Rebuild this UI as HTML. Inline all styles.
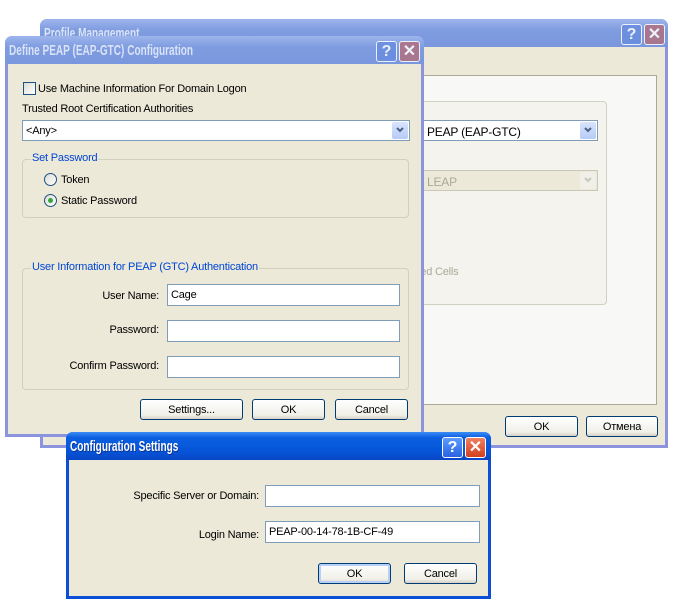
<!DOCTYPE html>
<html><head><meta charset="utf-8"><style>
*{box-sizing:border-box;margin:0;padding:0}
body{width:675px;height:611px;background:#fff;position:relative;overflow:hidden;font-family:"Liberation Sans",sans-serif;font-size:11px;letter-spacing:-0.2px;color:#000}
.abs{position:absolute}
.win{position:absolute;border-radius:7px 7px 0 0}
.tb{position:absolute;left:0;right:0;top:0;height:28px;border-radius:7px 7px 0 0;font-weight:bold;font-size:15px;padding:6px 0 0 4px;letter-spacing:0}
.tb span{display:inline-block;transform:scaleX(.67);transform-origin:left;white-space:nowrap}
.inact .tb{background:linear-gradient(#9db5ec,#7f9ce0 40%,#7a97de);color:#d9e3f7}
.act .tb{background:linear-gradient(#3d8cf5,#0a5fe0 20%,#0654d8 70%,#0846c4);color:#fff;text-shadow:1px 1px #0a2f8a}
.body{position:absolute;background:#ece9d8}
.btnq,.btnx{position:absolute;top:5px;width:21px;height:21px;border:1px solid #fff;border-radius:3px;color:#fff;font-weight:bold;font-size:16px;text-align:center;line-height:19px;letter-spacing:0}
.inact .btnq{background:#6a8de0;opacity:.85}
.inact .btnx{background:#b07080;opacity:.85}
.act .btnq{background:linear-gradient(#5c9bff,#2a62e0)}
.act .btnx{background:linear-gradient(#f08060,#d2401c)}
.inp{position:absolute;background:#fff;border:1px solid #7f9db9;padding:4px 3px;font-size:11px}
.btn{position:absolute;height:21px;border:1px solid #003c74;border-radius:3px;background:linear-gradient(#fff,#f0efe8 80%,#d6d0c5);text-align:center;line-height:20px;font-size:11px}
.grp{position:absolute;border:1px solid #d0d0bf;border-radius:4px}
.leg{position:absolute;top:-8px;left:8px;background:#ece9d8;color:#0046d5;padding:0 1px;font-size:11px;white-space:nowrap}
.lbl{position:absolute;font-size:11px;white-space:nowrap;margin-top:1px}
.r{text-align:right}
.dd{position:absolute;width:16px;height:17px;right:1px;top:1px;background:linear-gradient(#d8e4fd,#b6cbf6);border-radius:2px}
.dd svg{position:absolute;left:4px;top:5px}
.radio{position:absolute;width:13px;height:13px;border-radius:50%;border:1px solid #1c5180;background:linear-gradient(135deg,#dcdcd6,#fff)}
</style></head><body>

<!-- Back window -->
<div class="win inact" style="left:40px;top:19px;width:628px;height:429px;background:#8b94dd">
 <div class="tb"><span>Profile Management</span></div>
 <div class="btnq" style="left:581px">?</div><div class="btnx" style="left:604px">✕</div>
 <div class="body" style="left:3px;top:28px;right:3px;bottom:3px">
  <div class="abs" style="left:372px;top:28px;width:242px;height:330px;background:#f8f8f6;border:1px solid #aca899"></div>
  <div class="grp" style="left:372px;top:54px;width:192px;height:204px;background:#f4f3ee"></div>
  <div class="inp" style="left:380px;top:73px;width:175px;height:21px;font-size:12px">PEAP (EAP-GTC)<div class="dd"><svg width="8" height="6"><path d="M1 1L4 4L7 1" stroke="#4d6185" stroke-width="2" fill="none"/></svg></div></div>
  <div class="inp" style="left:380px;top:123px;width:175px;height:21px;background:#ece9d8;border-color:#c9c7ba;color:#aca899;font-size:12px">LEAP<div class="dd" style="background:#f0efe8"><svg width="8" height="6"><path d="M1 1L4 4L7 1" stroke="#c9c7ba" stroke-width="2" fill="none"/></svg></div></div>
  <div class="lbl" style="left:372px;top:218px;color:#aca899">xed Cells</div>
  <div class="btn" style="left:462px;top:369px;width:73px">OK</div>
  <div class="btn" style="left:543px;top:369px;width:72px">Отмена</div>
 </div>
</div>

<!-- Middle window -->
<div class="win inact" style="left:5px;top:36px;width:419px;height:401px;background:#8b94dd">
 <div class="tb"><span>Define PEAP (EAP-GTC) Configuration</span></div>
 <div class="btnq" style="left:371px">?</div><div class="btnx" style="left:394px">✕</div>
 <div class="body" style="left:3px;top:28px;right:3px;bottom:3px">
  <div class="abs" style="left:15px;top:18px;width:13px;height:13px;border:1px solid #1c5180;background:linear-gradient(135deg,#dcdcd6,#fff)"></div>
  <div class="lbl" style="left:30px;top:18px">Use Machine Information For Domain Logon</div>
  <div class="lbl" style="left:14px;top:38px">Trusted Root Certification Authorities</div>
  <div class="inp" style="left:14px;top:56px;width:388px;height:21px">&lt;Any&gt;<div class="dd"><svg width="8" height="6"><path d="M1 1L4 4L7 1" stroke="#4d6185" stroke-width="2" fill="none"/></svg></div></div>
  <div class="grp" style="left:14px;top:95px;width:387px;height:59px"><div class="leg">Set Password</div></div>
  <div class="radio" style="left:36px;top:109px"></div><div class="lbl" style="left:53px;top:109px">Token</div>
  <div class="radio" style="left:36px;top:130px"><div class="abs" style="left:3px;top:3px;width:5px;height:5px;border-radius:50%;background:#3aa23a"></div></div><div class="lbl" style="left:53px;top:130px">Static Password</div>
  <div class="grp" style="left:14px;top:204px;width:387px;height:122px"><div class="leg">User Information for PEAP (GTC) Authentication</div></div>
  <div class="lbl r" style="left:20px;width:131px;top:225px">User Name:</div>
  <div class="inp" style="left:159px;top:220px;width:233px;height:22px">Cage</div>
  <div class="lbl r" style="left:20px;width:131px;top:259px">Password:</div>
  <div class="inp" style="left:159px;top:256px;width:233px;height:22px"></div>
  <div class="lbl r" style="left:20px;width:131px;top:295px">Confirm Password:</div>
  <div class="inp" style="left:159px;top:292px;width:233px;height:22px"></div>
  <div class="btn" style="left:132px;top:335px;width:103px">Settings...</div>
  <div class="btn" style="left:244px;top:335px;width:73px">OK</div>
  <div class="btn" style="left:327px;top:335px;width:73px">Cancel</div>
 </div>
</div>

<!-- Front window -->
<div class="win act" style="left:66px;top:432px;width:425px;height:167px;background:#0b4fd6">
 <div class="tb"><span>Configuration Settings</span></div>
 <div class="btnq" style="left:376px">?</div><div class="btnx" style="left:399px">✕</div>
 <div class="body" style="left:3px;top:28px;right:3px;bottom:3px">
  <div class="lbl r" style="left:10px;width:180px;top:29px">Specific Server or Domain:</div>
  <div class="inp" style="left:196px;top:25px;width:215px;height:22px"></div>
  <div class="lbl r" style="left:10px;width:180px;top:68px">Login Name:</div>
  <div class="inp" style="left:196px;top:61px;width:215px;height:22px">PEAP-00-14-78-1B-CF-49</div>
  <div class="btn" style="left:249px;top:103px;width:73px;border-color:#003c74;box-shadow:inset 0 0 0 2px #b8d0f8">OK</div>
  <div class="btn" style="left:335px;top:103px;width:73px">Cancel</div>
 </div>
</div>
</body></html>
